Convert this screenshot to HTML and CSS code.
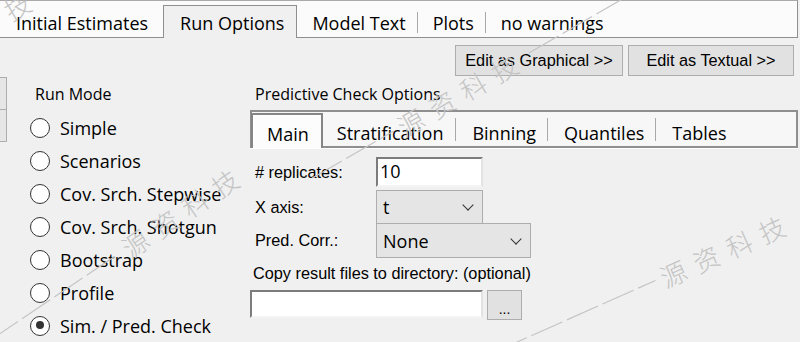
FILE: index.html
```html
<!DOCTYPE html>
<html lang="en">
<head>
  <meta charset="UTF-8">
  <title>Run Options</title>
  <link rel="stylesheet" href="styles.css">
</head>
<body>
  <div class="tabbar">
    <div class="tab first">Initial Estimates</div>
    <div class="tab active">Run Options</div>
    <div class="tab">Model Text</div>
    <span class="sep"></span>
    <div class="tab">Plots</div>
    <span class="sep"></span>
    <div class="tab">no warnings</div>
  </div>

  <div class="toolbar">
    <button class="btn graphical">Edit as Graphical &gt;&gt;</button>
    <button class="btn textual">Edit as Textual &gt;&gt;</button>
  </div>

  <div class="panel">
    <div class="stub">
      <div></div>
      <div></div>
    </div>

    <div class="run-mode">
      <div class="group-title">Run Mode</div>
      <div class="radio"><span class="circle"></span>Simple</div>
      <div class="radio"><span class="circle"></span>Scenarios</div>
      <div class="radio"><span class="circle"></span>Cov. Srch. Stepwise</div>
      <div class="radio"><span class="circle"></span>Cov. Srch. Shotgun</div>
      <div class="radio"><span class="circle"></span>Bootstrap</div>
      <div class="radio"><span class="circle"></span>Profile</div>
      <div class="radio"><span class="circle checked"></span>Sim. / Pred. Check</div>
    </div>

    <div class="pc-options">
      <div class="group-title">Predictive Check Options</div>
      <div class="subtabs">
        <div class="subtab active">Main</div>
        <div class="subtab">Stratification</div>
        <span class="subsep"></span>
        <div class="subtab">Binning</div>
        <span class="subsep"></span>
        <div class="subtab">Quantiles</div>
        <span class="subsep"></span>
        <div class="subtab">Tables</div>
      </div>

      <div class="form">
        <div class="row replicates">
          <span class="label"># replicates:</span>
          <div class="textbox short">10</div>
        </div>
        <div class="row xaxis">
          <span class="label">X axis:</span>
          <div class="select short"><span>t</span><span class="chevron"></span></div>
        </div>
        <div class="row predcorr">
          <span class="label">Pred. Corr.:</span>
          <div class="select wide"><span>None</span><span class="chevron"></span></div>
        </div>
        <div class="label copy">Copy result files to directory: (optional)</div>
        <div class="row dir">
          <div class="textbox long"></div>
          <button class="browse">...</button>
        </div>
      </div>
    </div>
  </div>

  <svg class="watermark" width="800" height="342" viewBox="0 0 800 342">
    <g transform="translate(-88 66) rotate(-30)">
      <line x1="-220" y1="0" x2="-6" y2="0"></line>
      <text x="0" y="0">源资科技</text>
    </g>
    <g transform="translate(124 250) rotate(-34)">
      <line x1="-240" y1="0" x2="-6" y2="0"></line>
      <text x="0" y="0">源资科技</text>
    </g>
    <g transform="translate(399 128) rotate(-30)">
      <line x1="-100" y1="0" x2="-6" y2="0"></line>
      <text x="0" y="0">源资科技</text>
      <line x1="150" y1="0" x2="300" y2="0"></line>
    </g>
    <g transform="translate(661 278) rotate(-24)">
      <line x1="-220" y1="0" x2="-6" y2="0"></line>
      <text x="0" y="0">源资科技</text>
    </g>
  </svg>
</body>
</html>
```

FILE: styles.css
```css
* {
  box-sizing: border-box;
}

body {
  margin: 0;
  width: 800px;
  height: 342px;
  overflow: hidden;
  position: relative;
  background: #f0f0f0;
  color: #000;
  font-family: "Open Sans", sans-serif;
  font-weight: 500;
}

/* top tab strip */
.tabbar {
  display: flex;
  align-items: flex-start;
  width: 798px;
  height: 38px;
  background: #fbfbfb;
  border-top: 1px solid #a9a9a9;
  border-right: 1px solid #8f8f8f;
  border-bottom: 1px solid #8f8f8f;
}

.tab {
  display: flex;
  align-items: center;
  height: 28px;
  margin-top: 8px;
  padding: 0 11px 0 15px;
  font-size: 18px;
  white-space: nowrap;
}

.tab.first {
  padding-left: 16px;
  padding-right: 15px;
}

.tab.active {
  height: 33px;
  margin-top: 4px;
  padding: 2px 12px 0 16px;
  background: #f0f0f0;
  border: 1px solid #8f8f8f;
  border-bottom: none;
}

.sep {
  width: 1px;
  height: 21px;
  margin-top: 11px;
  background: #a8a8a8;
}

/* edit buttons */
.toolbar {
  display: flex;
  justify-content: flex-end;
  gap: 5px;
  padding: 7px 6px 0 0;
}

.btn {
  height: 31px;
  margin: 0;
  padding: 0;
  border: 1px solid #adadad;
  background: #e1e1e1;
  font-family: "Liberation Sans", sans-serif;
  font-size: 16.3px;
  color: #000;
}

.btn.graphical {
  width: 168px;
}

.btn.textual {
  width: 166px;
}

.panel {
  display: flex;
  margin-top: 1px;
}

.stub {
  width: 7px;
  display: flex;
  flex-direction: column;
}

.stub div {
  height: 33px;
  background: #e6e6e6;
  border: 1px solid #adadad;
  border-left: none;
}

.stub div + div {
  height: 32px;
  border-top: none;
}

.group-title {
  height: 22px;
  margin-top: 6px;
  line-height: 22px;
  font-size: 16px;
  white-space: nowrap;
}

/* run mode */
.run-mode {
  width: 243px;
  padding-left: 23px;
}

.run-mode .group-title {
  margin-left: 5px;
  margin-bottom: 6px;
}

.radio {
  display: flex;
  align-items: center;
  height: 33px;
  font-size: 18px;
  white-space: nowrap;
}

.circle {
  position: relative;
  width: 20px;
  height: 20px;
  margin-right: 10px;
  border: 1.5px solid #333;
  border-radius: 50%;
  background: #fff;
  flex: none;
}

.circle.checked::after {
  content: "";
  position: absolute;
  left: 4.5px;
  top: 4.5px;
  width: 8px;
  height: 8px;
  border-radius: 50%;
  background: #333;
}

/* predictive check options */
.pc-options {
  width: 548px;
}

.pc-options .group-title {
  margin-left: 5px;
  margin-bottom: 5px;
}

.subtabs {
  display: flex;
  align-items: flex-start;
  height: 38px;
  background: #f7f7f7;
  border: 2px solid #8f8f8f;
  box-shadow: 0 1px 0 #fff;
}

.subtab {
  display: flex;
  align-items: center;
  height: 34px;
  padding: 7px 11px 0 16px;
  font-size: 18px;
  white-space: nowrap;
}

.subtab.active {
  height: 35px;
  margin-top: 1px;
  margin-left: -1px;
  margin-bottom: -2px;
  padding: 5px 12px 0 14px;
  background: #fcfcfc;
  border: 2px solid #858585;
  border-bottom: none;
  box-shadow: inset 1px 1px 0 #fff;
}

.subtab.active + .subtab {
  padding-left: 14px;
  padding-right: 12px;
}

.subsep {
  width: 1px;
  height: 23px;
  margin-top: 6px;
  background: #a8a8a8;
}

/* form */
.form {
  padding-top: 9px;
}

.row {
  display: flex;
  align-items: center;
}

.label {
  width: 126px;
  padding-left: 5px;
  font-family: "Liberation Sans", sans-serif;
  font-weight: 400;
  font-size: 16.3px;
  white-space: nowrap;
}

.textbox {
  height: 30px;
  padding: 0 2px;
  background: #fff;
  border: 2px solid;
  border-color: #7c7c7c #e3e3e3 #f4f4f4 #7c7c7c;
  font-size: 18px;
  line-height: 24px;
}

.textbox.short {
  width: 107px;
}

.xaxis {
  margin-top: 3px;
}

.predcorr {
  margin-top: -1px;
}

.select {
  display: flex;
  align-items: center;
  justify-content: space-between;
  padding: 0 8px 0 6px;
  background: #e5e5e5;
  border: 1px solid #adadad;
  font-size: 18px;
}

.select.short {
  width: 107px;
  height: 34px;
}

.select.wide {
  width: 155px;
  height: 35px;
}

.chevron {
  width: 8px;
  height: 8px;
  margin-bottom: 4px;
  margin-right: 2px;
  border-right: 1.3px solid #333;
  border-bottom: 1.3px solid #333;
  transform: rotate(45deg);
}

.label.copy {
  width: auto;
  height: 20px;
  margin-top: 5px;
  padding-left: 3px;
  line-height: 20px;
}

.dir {
  margin-top: 7px;
  align-items: flex-start;
  gap: 4px;
}

.textbox.long {
  width: 233px;
  height: 28px;
}

.browse {
  width: 35px;
  height: 30px;
  margin: 0;
  padding: 8px 0 0;
  border: 1px solid #adadad;
  background: #e1e1e1;
  font-family: "Liberation Sans", sans-serif;
  font-size: 14px;
  color: #000;
}

/* diagonal watermark laid over the capture */
.watermark {
  position: absolute;
  left: 0;
  top: 0;
  pointer-events: none;
}

.watermark line {
  stroke: #c4c4c4;
  stroke-width: 1.2;
  stroke-dasharray: 34 5;
}

.watermark text {
  fill: #c4c4c4;
  font-family: "Noto Sans CJK SC", sans-serif;
  font-size: 26px;
  font-weight: 300;
  letter-spacing: 10px;
  dominant-baseline: central;
}
```
